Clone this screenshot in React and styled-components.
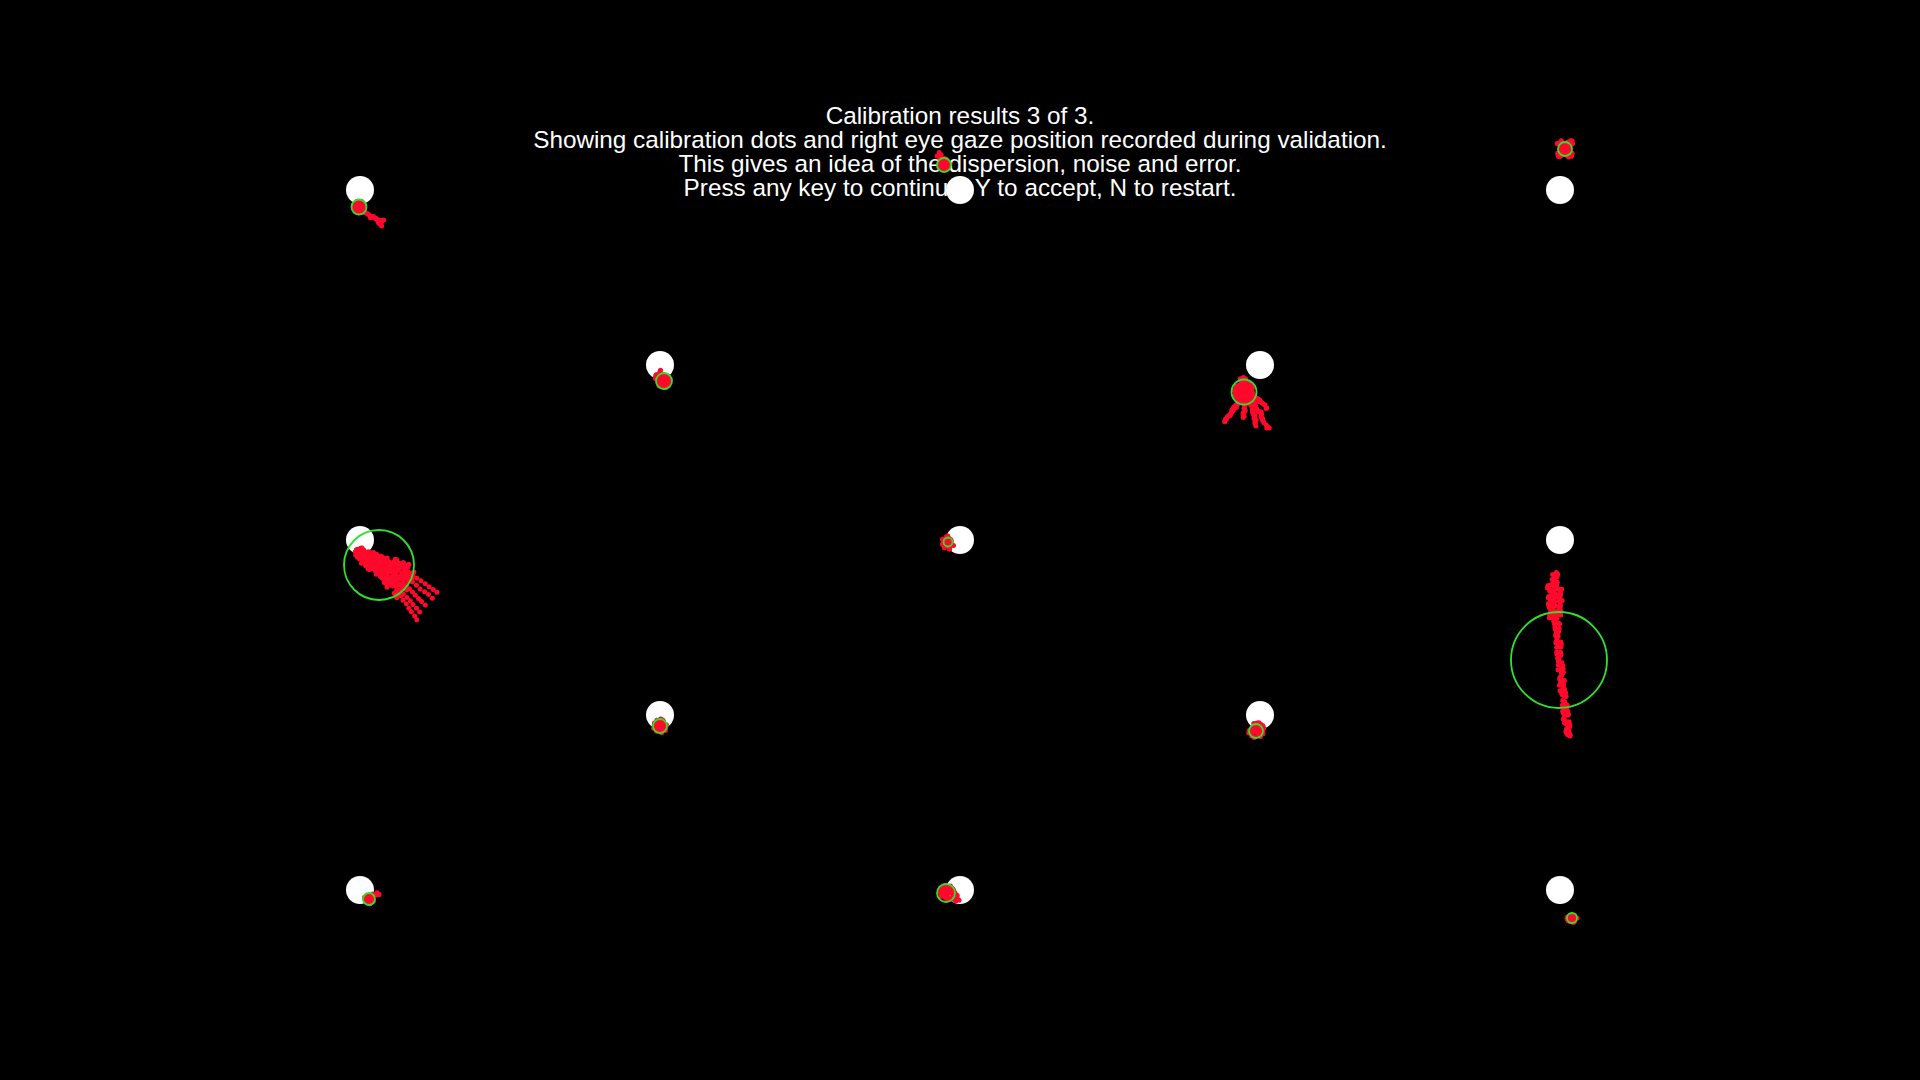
import { createGlobalStyle } from "styled-components";
import styled from "styled-components";

const GlobalStyle = createGlobalStyle`
  html, body {
    margin: 0;
    padding: 0;
    background: #000;
  }
`;

// gaze points, in screen pixels (1920x1080)
const targets = [
  {
    x: 360, y: 190, ring: [359, 207, 7.5],
    blobs: [[359, 207, 6, 50]],
    strands: [[362, 211, 380, 222, 1.2, 16], [378, 221, 384, 220, 0.6, 4], [378, 221, 381, 226, 0.6, 4]],
  },
  {
    x: 960, y: 190, ring: [944, 165, 7],
    blobs: [[944, 164, 6, 45]],
    strands: [[942, 160, 938, 153, 2, 10]],
  },
  {
    x: 1560, y: 190, ring: [1565, 149, 7],
    blobs: [[1560, 143, 3, 10], [1570, 143, 3, 10], [1560, 155, 3, 10], [1570, 155, 3, 10], [1565, 149, 5, 20]],
    strands: [],
  },
  {
    x: 660, y: 365, ring: [664, 381, 8],
    blobs: [[664, 381, 7, 60]],
    strands: [[655, 378, 660, 371, 1, 8]],
  },
  {
    x: 1260, y: 365, ring: [1244, 392, 12.5],
    blobs: [[1244, 392, 10, 90], [1243, 380, 3, 10]],
    strands: [
      [1240, 400, 1225, 422, 1.3, 20], [1245, 402, 1243, 418, 1.3, 14],
      [1250, 400, 1256, 425, 1.3, 20], [1252, 398, 1268, 428, 1.3, 24],
      [1254, 396, 1267, 408, 1.3, 12],
    ],
  },
  {
    x: 360, y: 540, ring: [379, 565, 35],
    blobs: [[360, 553, 5, 30], [372, 558, 6, 40]],
    strands: [
      [358, 552, 410, 569, 4.5, 80], [360, 555, 408, 578, 5, 90],
      [362, 557, 405, 586, 5, 80], [364, 559, 400, 594, 4, 60],
      [405, 570, 437, 592, 0.4, 9], [405, 576, 432, 598, 0.4, 8],
      [403, 582, 425, 605, 0.4, 8], [400, 590, 420, 612, 0.4, 7],
      [398, 592, 417, 620, 0.4, 8],
    ],
  },
  {
    x: 960, y: 540, ring: [948, 542, 4.5],
    blobs: [[948, 543, 7, 45]],
    strands: [],
  },
  {
    x: 1560, y: 540, ring: [1559, 660, 48],
    blobs: [],
    strands: [
      [1555, 574, 1553, 610, 3, 45], [1549, 585, 1551, 618, 2.5, 25],
      [1560, 588, 1561, 614, 1.8, 18], [1555, 610, 1562, 680, 3, 70],
      [1562, 680, 1568, 737, 3, 55],
    ],
  },
  {
    x: 660, y: 715, ring: [660, 726, 7],
    blobs: [[660, 726, 7, 45]],
    strands: [],
  },
  {
    x: 1260, y: 715, ring: [1256, 731, 7],
    blobs: [[1256, 730, 8, 50]],
    strands: [],
  },
  {
    x: 360, y: 890, ring: [369, 899, 6],
    blobs: [[369, 899, 5, 30]],
    strands: [[372, 896, 379, 893, 1.5, 8]],
  },
  {
    x: 960, y: 890, ring: [946, 893, 9],
    blobs: [[947, 893, 8, 55], [956, 898, 4, 12]],
    strands: [],
  },
  {
    x: 1560, y: 890, ring: [1572, 918, 5],
    blobs: [[1572, 918, 5, 28]],
    strands: [],
  },
];

function seeded(seed) {
  let a = seed;
  return () => {
    a |= 0;
    a = (a + 0x6d2b79f5) | 0;
    let t = Math.imul(a ^ (a >>> 15), 1 | a);
    t = (t + Math.imul(t ^ (t >>> 7), 61 | t)) ^ t;
    return ((t ^ (t >>> 14)) >>> 0) / 4294967296;
  };
}

function samplesFor(target, index) {
  const rnd = seeded(index * 97 + 13);
  const out = [];
  target.blobs.forEach(([cx, cy, r, n]) => {
    for (let i = 0; i < n; i++) {
      const a = rnd() * Math.PI * 2;
      const d = Math.sqrt(rnd()) * r;
      out.push([cx + Math.cos(a) * d, cy + Math.sin(a) * d]);
    }
  });
  target.strands.forEach(([x1, y1, x2, y2, jit, n]) => {
    for (let i = 0; i < n; i++) {
      const t = n === 1 ? 0 : i / (n - 1);
      out.push([
        x1 + (x2 - x1) * t + (rnd() - 0.5) * 2 * jit,
        y1 + (y2 - y1) * t + (rnd() - 0.5) * 2 * jit,
      ]);
    }
  });
  return out;
}

export default function App() {
  return (
    <>
      <GlobalStyle />
      <Screen>
        <Message>
          <Line>Calibration results 3 of 3.</Line>
          <Line>Showing calibration dots and right eye gaze position recorded during validation.</Line>
          <Line>This gives an idea of the dispersion, noise and error.</Line>
          <Line>Press any key to continue, Y to accept, N to restart.</Line>
        </Message>
        <Canvas viewBox="0 0 1920 1080">
          {targets.map((t, i) => (
            <TargetDot key={`d${i}`} cx={t.x} cy={t.y} r={14} />
          ))}
          {targets.map((t, i) =>
            samplesFor(t, i).map(([sx, sy], j) => (
              <Sample key={`s${i}-${j}`} cx={sx} cy={sy} r={2.5} />
            ))
          )}
          {targets.map((t, i) => (
            <Ring key={`r${i}`} cx={t.ring[0]} cy={t.ring[1]} r={t.ring[2]} />
          ))}
        </Canvas>
      </Screen>
    </>
  );
}

const Screen = styled.div`
  position: relative;
  width: 1920px;
  height: 1080px;
  background: #000;
  overflow: hidden;
`;

const Message = styled.div`
  padding-top: 104px;
  display: flex;
  flex-direction: column;
  align-items: center;
  color: #fff;
  font-family: "Liberation Sans", Arial, sans-serif;
  font-size: 24.3px;
  line-height: 24px;
`;

const Line = styled.div`
  white-space: nowrap;
`;

const Canvas = styled.svg`
  position: absolute;
  inset: 0;
  width: 1920px;
  height: 1080px;
`;

const TargetDot = styled.circle`
  fill: #fff;
`;

const Sample = styled.circle`
  fill: #ff0a2c;
`;

const Ring = styled.circle`
  fill: none;
  stroke: #2fe02f;
  stroke-width: 1.8;
`;
